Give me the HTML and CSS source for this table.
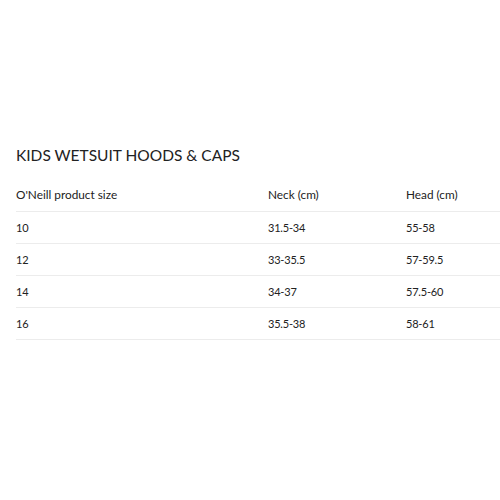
FILE: index.html
```html
<!DOCTYPE html>
<html>
<head>
<meta charset="utf-8">
<link rel="stylesheet" href="styles.css">
</head>
<body>
<div class="page">
  <h2 class="title">KIDS WETSUIT HOODS &amp; CAPS</h2>
  <div class="table">
    <div class="row head"><span>O'Neill product size</span><span>Neck (cm)</span><span>Head (cm)</span></div>
    <div class="row"><span>10</span><span>31.5-34</span><span>55-58</span></div>
    <div class="row"><span>12</span><span>33-35.5</span><span>57-59.5</span></div>
    <div class="row"><span>14</span><span>34-37</span><span>57.5-60</span></div>
    <div class="row"><span>16</span><span>35.5-38</span><span>58-61</span></div>
  </div>
</div>
</body>
</html>
```
FILE: styles.css
```css
html, body {
  margin: 0;
  padding: 0;
  background: #fff;
}
body {
  font-family: Lato, "Open Sans", sans-serif;
  color: #222;
}
.page {
  padding: 145px 0 0 16px;
}
.title {
  margin: 0;
  font-size: 15.5px;
  font-weight: 400;
  letter-spacing: 0;
  line-height: 20px;
}
.table {
  margin-top: 16px;
}
.row {
  display: grid;
  grid-template-columns: 252px 138px 1fr;
  height: 31px;
  align-items: center;
  border-bottom: 1px solid #ececec;
  font-size: 11px;
  letter-spacing: -0.2px;
}
.row.head {
  height: 27px;
  padding-bottom: 3px;
  font-size: 11.8px;
  letter-spacing: 0;
}
```
